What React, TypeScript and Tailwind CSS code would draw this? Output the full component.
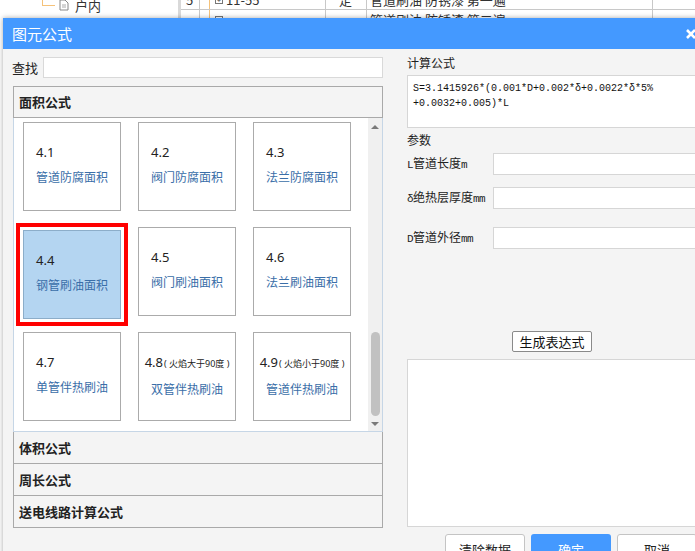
import React from "react";
import clsx from "clsx";

type Item = {
  num: string;
  note?: string;
  label: string;
  selected?: boolean;
};

const items: Item[] = [
  { num: "4.1", label: "管道防腐面积" },
  { num: "4.2", label: "阀门防腐面积" },
  { num: "4.3", label: "法兰防腐面积" },
  { num: "4.4", label: "钢管刷油面积", selected: true },
  { num: "4.5", label: "阀门刷油面积" },
  { num: "4.6", label: "法兰刷油面积" },
  { num: "4.7", label: "单管伴热刷油" },
  { num: "4.8", note: "( 火焰大于90度 )", label: "双管伴热刷油" },
  { num: "4.9", note: "( 火焰小于90度 )", label: "管道伴热刷油" },
];

// 参数行: 前缀符号 + 中文 + 单位
const params = [
  { sym: "L", name: "管道长度", unit: "m", gap: "mt-[5px]" },
  { sym: "δ", name: "绝热层厚度", unit: "mm", gap: "mt-[12px]" },
  { sym: "D", name: "管道外径", unit: "mm", gap: "mt-[18px]" },
];

const mono = "font-['Liberation_Mono',monospace] text-[11px] tracking-[-0.6px]";

function FormulaCard({ item }: { item: Item }) {
  return (
    <div
      className={clsx(
        "w-[98px] h-[89px] border flex justify-center",
        item.selected
          ? "bg-[#b4d5f1] border-[#8cadc9] outline-4 outline-[#ff0000] outline-offset-[3px] translate-y-[3px]"
          : "bg-white border-[#ababab]"
      )}
    >
      <div className="w-fit pt-[21px]">
        <div className="text-[13px] leading-[16px] text-[#222] font-['Noto_Sans','Noto_Sans_CJK_SC',sans-serif] whitespace-nowrap">
          {item.num}
          {item.note && <span className="text-[9px] ml-[1px]">{item.note}</span>}
        </div>
        <div className="mt-[9px] text-center text-[12px] leading-[16px] text-[#3a6ea8] whitespace-nowrap">
          {item.label}
        </div>
      </div>
    </div>
  );
}

function GroupHeader({ title, first }: { title: string; first?: boolean }) {
  return (
    <div
      className={clsx(
        "flex items-center pl-[5px] border-x border-b border-[#a9a9a9] bg-[#f4f4f4] text-[13px] font-bold text-[#222]",
        first ? "h-[32px] border-t" : "h-[32px]"
      )}
    >
      {title}
    </div>
  );
}

function Background() {
  return (
    <div className="flex h-full bg-white text-[13px] text-[#333]">
      {/* tree pane */}
      <div className="w-[178px] relative">
        <div className="absolute left-[42px] top-0 w-px h-[6px] bg-[#f5c27a]" />
        <div className="absolute left-[42px] top-[5px] w-[13px] h-px bg-[#f5c27a]" />
        <svg className="absolute left-[59px] top-[-1px]" width="10" height="12" viewBox="0 0 10 12">
          <path d="M1 1h5l3 3v7H1z" fill="#fff" stroke="#888" />
          <path d="M3 6h4M3 8h4" stroke="#aaa" />
        </svg>
        <span className="absolute left-[75px] top-[-4px]">户内</span>
      </div>
      <div className="w-[3px] bg-[#d9d9d9]" />
      {/* table */}
      <div className="flex-1 flex flex-col -mt-[10px]">
        {[
          { n: "5", code: "11-55", t: "定", name: "管道刷油 防锈漆 第一遍" },
          { n: "", code: "", t: "", name: "管道刷油 防锈漆 第二遍" },
        ].map((r, i) => (
          <div key={i} className="flex h-[20px] border-b border-[#c8c8c8]">
            <div className="w-[19px] border-r border-[#c8c8c8] pl-[5px] leading-[20px]">{r.n}</div>
            <div className="w-[9px]" />
            <div className="w-[117px] border-l border-[#f5c27a] border-r border-r-[#c8c8c8] flex items-center gap-[3px] pl-[5px]">
              <span className="w-[8px] h-[8px] border border-[#777] text-[7px] leading-[6px] text-center">{r.code ? "+" : ""}</span>
              <span>{r.code}</span>
            </div>
            <div className="w-[41px] border-r border-[#c8c8c8] pl-[13px] leading-[20px]">{r.t}</div>
            <div className="w-[286px] border-r border-[#c8c8c8] pl-[3px] leading-[20px]">{r.name}</div>
            <div className="flex-1" />
          </div>
        ))}
      </div>
    </div>
  );
}

export default function App() {
  return (
    <div className="relative w-[695px] h-[551px] overflow-hidden font-['Noto_Sans_CJK_SC',sans-serif]">
      <Background />

      {/* dialog window */}
      <div className="absolute left-[3px] top-[18px] w-[702px] h-[580px] flex flex-col bg-[#f4f4f4] shadow-[0_0_5px_rgba(0,0,0,0.35)]">
        <div className="h-[31px] shrink-0 bg-[#4499ff] flex items-center justify-between pl-[9px] pr-[9px]">
          <span className="text-[15px] text-white pt-[2px]">图元公式</span>
          <svg width="10" height="10" viewBox="0 0 10 10">
            <path d="M1 1l8 8M9 1l-8 8" stroke="#fff" strokeWidth="2.6" />
          </svg>
        </div>

        <div className="flex flex-1">
          {/* left column */}
          <div className="w-[392px] pl-[9px] flex flex-col">
            <div className="flex items-center mt-[8px]">
              <span className="w-[31px] text-[13px] text-[#222]">查找</span>
              <div className="w-[340px] h-[21px] bg-white border border-[#d9d9d9]" />
            </div>

            <div className="ml-[1px] mt-[8px] w-[370px]">
              <GroupHeader title="面积公式" first />
              <div className="h-[314px] flex bg-white border-x border-b border-[#c6d6e6]">
                <div className="flex-1 pl-[9px] pt-[4px]">
                  <div className="grid grid-cols-[98px_98px_98px] gap-x-[17px] gap-y-[16px]">
                    {items.map((it) => (
                      <FormulaCard key={it.num} item={it} />
                    ))}
                  </div>
                </div>
                <div className="w-[14px] bg-[#f0f0f0] flex flex-col items-center">
                  <svg className="mt-[6px]" width="8" height="5" viewBox="0 0 8 5">
                    <path d="M0 5L4 1L8 5z" fill="#7a7a7a" />
                  </svg>
                  <div className="flex-1" />
                  <div className="w-[9px] h-[84px] rounded-full bg-[#c1c1c1]" />
                  <svg className="mt-[6px] mb-[4px]" width="8" height="5" viewBox="0 0 8 5">
                    <path d="M0 0L4 4L8 0z" fill="#7a7a7a" />
                  </svg>
                </div>
              </div>
              <GroupHeader title="体积公式" />
              <GroupHeader title="周长公式" />
              <GroupHeader title="送电线路计算公式" />
            </div>
          </div>

          {/* right column */}
          <div className="ml-[12px] w-[290px] flex flex-col text-[#222]">
            <div className="pt-[6px] text-[12px] leading-[16px]">计算公式</div>
            <div className="mt-[4px] h-[53px] shrink-0 bg-white border border-[#d6d6d6] pl-[5px] pt-[5px] text-[10px] leading-[15px] text-[#111] font-['Liberation_Mono','Noto_Sans_CJK_SC',monospace]">
              <div>S=3.1415926*(0.001*D+0.002*δ+0.0022*δ*5%</div>
              <div>+0.0032+0.005)*L</div>
            </div>
            <div className="mt-[4px] text-[12px] leading-[16px]">参数</div>
            {params.map((p) => (
              <div key={p.sym} className={clsx("flex items-center", p.gap)}>
                <span className="w-[86px] text-[12px] whitespace-nowrap">
                  <span className={mono}>{p.sym}</span>
                  {p.name}
                  <span className={mono}>{p.unit}</span>
                </span>
                <div className="flex-1 h-[22px] bg-white border border-[#d6d6d6]" />
              </div>
            ))}
            <button className="mt-[82px] self-center w-[80px] h-[21px] shrink-0 bg-white border border-[#8a8a8a] rounded-[2px] text-[13px] leading-[19px] text-[#111]">
              生成表达式
            </button>
            <div className="mt-[7px] h-[168px] shrink-0 bg-white border border-[#d6d6d6]" />
            <div className="mt-[7px] flex justify-end gap-[6px]">
              <button className="w-[80px] h-[32px] bg-white border border-[#c4c4c4] rounded-[3px] text-[13px] text-[#222]">
                清除数据
              </button>
              <button className="w-[80px] h-[32px] bg-[#4499ff] rounded-[3px] text-[13px] text-white">
                确定
              </button>
              <button className="w-[80px] h-[32px] bg-white border border-[#c4c4c4] rounded-[3px] text-[13px] text-[#222]">
                取消
              </button>
            </div>
          </div>
        </div>
      </div>
    </div>
  );
}
